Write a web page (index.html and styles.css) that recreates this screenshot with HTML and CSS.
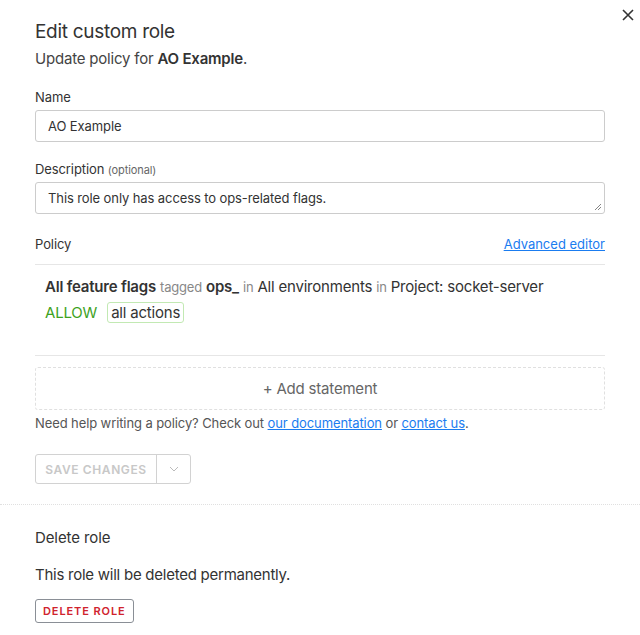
FILE: index.html
```html
<!DOCTYPE html>
<html>
<head>
<meta charset="utf-8">
<link rel="stylesheet" href="styles.css">
</head>
<body>
<div class="modal">
  <button class="close" aria-label="Close">
    <svg width="12" height="12" viewBox="0 0 12 12"><path d="M1 1L11 11M11 1L1 11" stroke="#333" stroke-width="1.6" fill="none"/></svg>
  </button>
  <section class="main">
    <h1 class="title">Edit custom role</h1>
    <p class="subtitle">Update policy for <strong>AO Example</strong>.</p>

    <div class="field field-name">
      <label class="label">Name</label>
      <div class="input">AO Example</div>
    </div>

    <div class="field field-desc">
      <label class="label">Description <span class="optional">(optional)</span></label>
      <div class="input textarea">This role only has access to ops-related flags.
        <svg class="grip" width="8" height="8" viewBox="0 0 8 8"><path d="M7 1L1 7M7 4L4 7" stroke="#777" stroke-width="0.9"/></svg>
      </div>
    </div>

    <div class="policy-head">
      <span class="label">Policy</span>
      <a class="link" href="#">Advanced editor</a>
    </div>

    <div class="statement">
      <div class="stmt-line"><b>All feature flags</b> <span class="muted">tagged</span> <b>ops_</b> <span class="muted">in</span> All environments <span class="muted">in</span> Project: socket-server</div>
      <div class="stmt-actions"><span class="allow">ALLOW</span><span class="action-tag">all actions</span></div>
    </div>

    <div class="add-statement">+ Add statement</div>
    <p class="help">Need help writing a policy? Check out <a class="link" href="#">our documentation</a> or <a class="link" href="#">contact us</a>.</p>

    <div class="save-group">
      <span class="save-btn">SAVE CHANGES</span>
      <span class="save-caret"><svg width="10" height="6" viewBox="0 0 10 6"><path d="M1 1L5 5L9 1" stroke="#bbb" stroke-width="1" fill="none"/></svg></span>
    </div>
  </section>

  <section class="danger">
    <h2 class="danger-title">Delete role</h2>
    <p class="danger-text">This role will be deleted permanently.</p>
    <span class="delete-btn">DELETE ROLE</span>
  </section>
</div>
</body>
</html>
```
FILE: styles.css
```css
* { box-sizing: border-box; }
html, body { margin: 0; padding: 0; background: #fff; }
body {
  font-family: Inter, "Noto Sans", sans-serif;
  color: #333;
  width: 640px;
  height: 635px;
  overflow: hidden;
}
.modal { position: relative; }
.close {
  position: absolute;
  top: 5px;
  right: 2px;
  width: 20px;
  height: 20px;
  border: 0;
  background: none;
  padding: 0;
  display: flex;
  align-items: center;
  justify-content: center;
}
.main { padding: 19px 35px 20px 35px; }
.title {
  margin: 0;
  font-size: 19px;
  font-weight: 400;
  line-height: 26px;
  color: #333;
  letter-spacing: -0.3px;
}
.subtitle {
  margin: 4px 0 0;
  font-size: 15px;
  line-height: 20px;
  color: #444;
  letter-spacing: -0.2px;
}
.subtitle strong { font-weight: 600; color: #333; }
.field { display: flex; flex-direction: column; }
.field-name { margin-top: 19px; }
.field-desc { margin-top: 18px; }
.label {
  font-size: 13px;
  line-height: 18px;
  height: 18px;
  color: #333;
  margin-bottom: 4px;
  letter-spacing: -0.1px;
}
.optional { font-size: 11px; color: #666; line-height: 1; }
.input {
  height: 32px;
  border: 1px solid #ccc;
  border-radius: 3px;
  padding: 0 12px;
  font-size: 13px;
  line-height: 30px;
  color: #333;
  letter-spacing: -0.1px;
}
.textarea { position: relative; }
.grip { position: absolute; right: 2px; bottom: 2px; }
.policy-head {
  margin-top: 21px;
  display: flex;
  justify-content: space-between;
  align-items: baseline;
  padding-bottom: 11px;
  border-bottom: 1px solid #e6e6e6;
}
.policy-head .label { margin-bottom: 0; }
.link { color: #1a7cf0; text-decoration: underline; font-size: 13px; }
.statement {
  padding: 12px 10px 32px;
  border-bottom: 1px solid #e6e6e6;
  font-size: 15px;
  color: #333;
  letter-spacing: -0.2px;
}
.stmt-line { line-height: 20px; }
.stmt-line b { font-weight: 600; }
.muted { color: #888; font-size: 13px; }
.stmt-actions { margin-top: 5px; display: flex; align-items: center; gap: 10px; }
.allow { color: #3ea21e; font-size: 15px; }
.action-tag {
  border: 1px solid #c2e9b3;
  border-radius: 3px;
  padding: 0 3px;
  line-height: 19px;
  font-size: 15px;
  color: #333;
}
.add-statement {
  margin-top: 11px;
  height: 43px;
  border: 1px dashed #e0e0e0;
  border-radius: 3px;
  display: flex;
  align-items: center;
  justify-content: center;
  font-size: 15px;
  color: #666;
  letter-spacing: -0.2px;
}
.help {
  margin: 4px 0 0;
  font-size: 13px;
  line-height: 18px;
  color: #555;
  letter-spacing: -0.1px;
}
.save-group {
  margin-top: 22px;
  display: inline-flex;
  height: 30px;
  border: 1px solid #d2d2d2;
  border-radius: 3px;
}
.save-btn {
  width: 121px;
  display: flex;
  align-items: center;
  justify-content: center;
  font-size: 12px;
  font-weight: 600;
  color: #c8c8c8;
  letter-spacing: 0.6px;
  border-right: 1px solid #d2d2d2;
}
.save-caret {
  width: 33px;
  display: flex;
  align-items: center;
  justify-content: center;
}
.danger {
  border-top: 1px dotted #e0e0e0;
  padding: 24px 35px 0;
}
.danger-title {
  margin: 0;
  font-size: 15px;
  font-weight: 400;
  line-height: 18px;
  color: #333;
  letter-spacing: -0.1px;
}
.danger-text {
  margin: 19px 0 0;
  font-size: 15px;
  line-height: 18px;
  color: #333;
  letter-spacing: -0.25px;
}
.delete-btn {
  display: inline-flex;
  align-items: center;
  margin-top: 15px;
  height: 24px;
  padding: 0 7px;
  border: 1px solid #8a8f96;
  border-radius: 3px;
  font-size: 11px;
  font-weight: 600;
  letter-spacing: 0.9px;
  color: #d0232d;
}
```
